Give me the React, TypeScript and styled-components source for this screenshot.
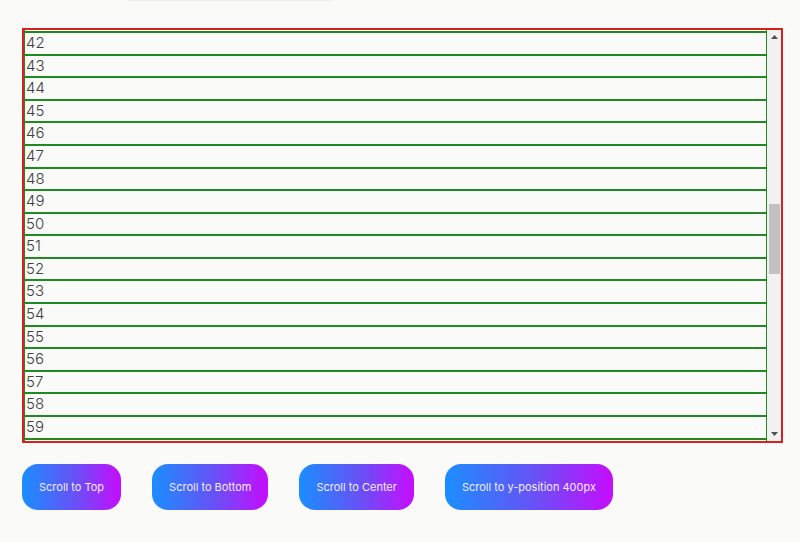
import { useEffect, useRef, useState } from 'react';
import styled, { createGlobalStyle } from 'styled-components';

const ROW_HEIGHT = 22.6;
const ROWS = Array.from({ length: 100 }, (_, i) => i);
const VIEW_HEIGHT = 411;
const ARROW = 14;

const GlobalStyle = createGlobalStyle`
	html, body {
		margin: 0;
		padding: 0;
		background: #fafaf9;
		font-family: Inter, 'Noto Sans', sans-serif;
	}
`;

const Page = styled.div`
	padding: 0 22px;
	display: flex;
	flex-direction: column;
`;

const TopStrip = styled.div`
	height: 28px;
	display: flex;
	padding-left: 106px;
`;

const TopEdge = styled.div`
	width: 202px;
	height: 1px;
	background: #ececec;
`;

const Frame = styled.div`
	width: 761px;
	height: ${VIEW_HEIGHT + 4}px;
	box-sizing: border-box;
	border: 2px solid #d91f1f;
	display: flex;
`;

const Viewport = styled.div`
	flex: 1;
	height: 100%;
	overflow-y: scroll;
	scrollbar-width: none;
	&::-webkit-scrollbar {
		display: none;
	}
`;

const Rail = styled.div`
	width: 14px;
	height: 100%;
	background: #f1f1f1;
	display: flex;
	flex-direction: column;
	position: relative;
`;

const ArrowButton = styled.button`
	height: ${ARROW}px;
	width: 100%;
	padding: 0;
	border: none;
	background: transparent;
	display: flex;
	align-items: center;
	justify-content: center;
	cursor: default;
`;

const Track = styled.div`
	flex: 1;
	position: relative;
`;

const Thumb = styled.div`
	position: absolute;
	left: 2px;
	right: 1px;
	background: #c1c1c1;
`;

const Row = styled.div`
	height: ${ROW_HEIGHT}px;
	box-sizing: border-box;
	border: 1px solid #1f8a1f;
	font-size: 15px;
	font-weight: 300;
	line-height: 20px;
	color: #404040;
	padding-left: 1px;
`;

const ButtonBar = styled.div`
	display: flex;
	gap: 31px;
	margin-top: 21px;
`;

const GradientButton = styled.button`
	height: 46px;
	padding: 0 17px;
	border: none;
	border-radius: 16px;
	background: linear-gradient(90deg, #1b8eff 0%, #6a4ff6 55%, #c70cff 100%);
	color: #f3ecff;
	font-family: Inter, 'Noto Sans', sans-serif;
	font-size: 11px;
	cursor: pointer;
`;

function Triangle({ up }: { up?: boolean }) {
	return (
		<svg width="7" height="4" viewBox="0 0 7 4">
			<path d={up ? 'M0 4h7L3.5 0z' : 'M0 0h7L3.5 4z'} fill="#505050" />
		</svg>
	);
}

export default function App() {
	const boxRef = useRef<HTMLDivElement>(null);
	const [scrollTop, setScrollTop] = useState(42 * ROW_HEIGHT - 2);
	const total = ROWS.length * ROW_HEIGHT;

	useEffect(() => {
		if (boxRef.current) boxRef.current.scrollTop = 42 * ROW_HEIGHT - 2;
	}, []);

	const scrollTo = (top: number) => {
		boxRef.current?.scrollTo({ top, behavior: 'smooth' });
	};

	const trackH = VIEW_HEIGHT - ARROW * 2;
	const thumbH = Math.max(20, (trackH * VIEW_HEIGHT) / total);
	const thumbTop = (scrollTop / (total - VIEW_HEIGHT)) * (trackH - thumbH);

	return (
		<>
			<GlobalStyle />
			<Page>
				<TopStrip>
					<TopEdge />
				</TopStrip>
				<Frame>
					<Viewport ref={boxRef} onScroll={(e) => setScrollTop(e.currentTarget.scrollTop)}>
						{ROWS.map((n) => (
							<Row key={n}>{n}</Row>
						))}
					</Viewport>
					<Rail>
						<ArrowButton onClick={() => boxRef.current?.scrollBy({ top: -40 })}>
							<Triangle up />
						</ArrowButton>
						<Track>
							<Thumb style={{ top: thumbTop, height: thumbH }} />
						</Track>
						<ArrowButton onClick={() => boxRef.current?.scrollBy({ top: 40 })}>
							<Triangle />
						</ArrowButton>
					</Rail>
				</Frame>
				<ButtonBar>
					<GradientButton onClick={() => scrollTo(0)}>Scroll to Top</GradientButton>
					<GradientButton onClick={() => scrollTo(total)}>Scroll to Bottom</GradientButton>
					<GradientButton onClick={() => scrollTo((total - VIEW_HEIGHT) / 2)}>Scroll to Center</GradientButton>
					<GradientButton onClick={() => scrollTo(400)}>Scroll to y-position 400px</GradientButton>
				</ButtonBar>
			</Page>
		</>
	);
}
